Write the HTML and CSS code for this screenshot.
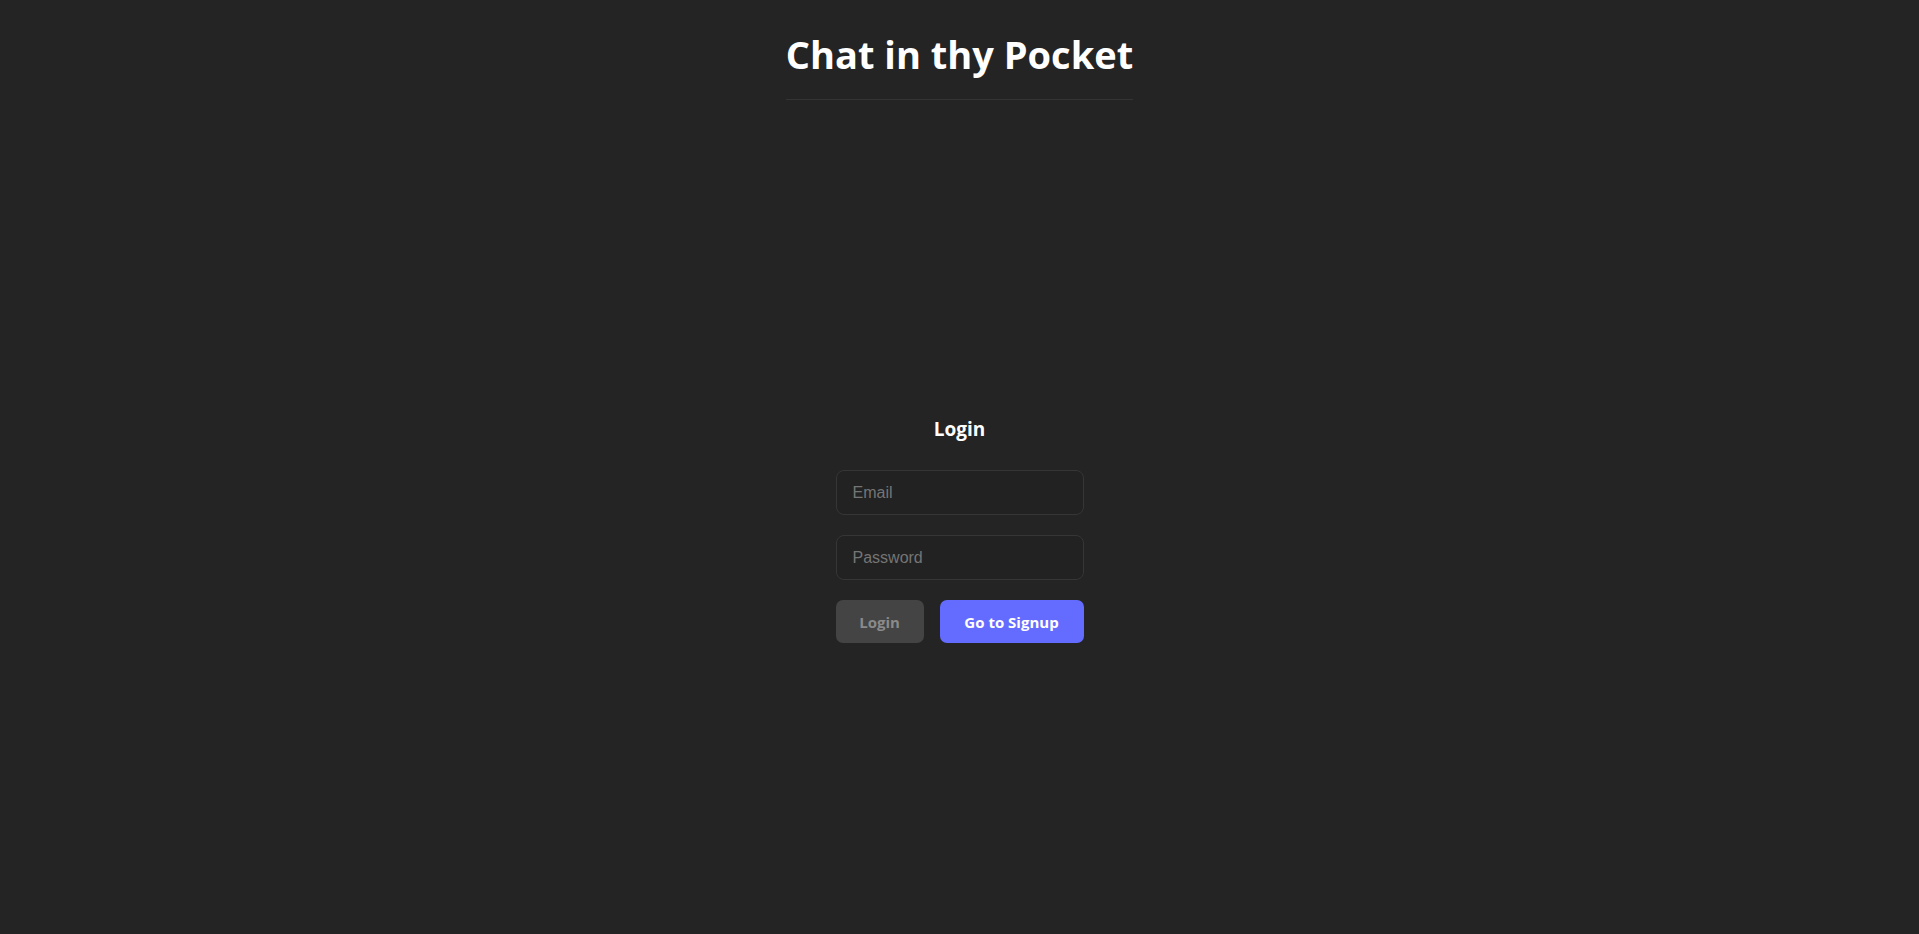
FILE: index.html
```html
<!DOCTYPE html>
<html lang="en">
<head>
<meta charset="utf-8">
<title>Chat in thy Pocket</title>
<link rel="stylesheet" href="styles.css">
</head>
<body>
<div class="app">
  <header class="header">
    <h1 class="title">Chat in thy Pocket</h1>
  </header>
  <main class="main">
    <form class="auth">
      <h2 class="auth-title">Login</h2>
      <input class="field" type="email" placeholder="Email">
      <input class="field" type="password" placeholder="Password">
      <div class="actions">
        <button type="button" class="btn btn-disabled" disabled>Login</button>
        <button type="button" class="btn btn-primary">Go to Signup</button>
      </div>
    </form>
  </main>
</div>
</body>
</html>
```
FILE: styles.css
```css
html, body {
  margin: 0;
  padding: 0;
  height: 100%;
  background: #242424;
  color: #fff;
  font-family: "Open Sans", "Noto Sans", sans-serif;
}

.app {
  min-height: 100vh;
  display: flex;
  flex-direction: column;
  align-items: center;
}

.header {
  display: flex;
  justify-content: center;
  padding-top: 29px;
  border-bottom: 1px solid #343434;
}

.title {
  margin: 0;
  padding-bottom: 20px;
  font-size: 38px;
  font-weight: 700;
  line-height: 50px;
  color: #fff;
  letter-spacing: 0;
}

.main {
  flex: 1;
  display: flex;
  align-items: center;
  justify-content: center;
  padding-top: 23px;
}

.auth {
  width: 248px;
  display: flex;
  flex-direction: column;
  align-items: stretch;
}

.auth-title {
  margin: 2px 0 28px;
  text-align: center;
  font-size: 19px;
  font-weight: 700;
  line-height: 26px;
}

.field {
  box-sizing: border-box;
  height: 45px;
  margin-bottom: 20px;
  padding: 0 16px;
  background: #222;
  border: 1px solid #363636;
  border-radius: 8px;
  color: #ddd;
  font-family: "Liberation Sans", Arial, sans-serif;
  font-size: 16px;
  outline: none;
}

.field::placeholder {
  color: #757575;
}

.actions {
  display: flex;
  gap: 16px;
}

.btn {
  height: 43px;
  padding: 0 22px;
  border: none;
  border-radius: 7px;
  font-family: "Open Sans", "Noto Sans", sans-serif;
  font-size: 15px;
  font-weight: 700;
}

.btn-disabled {
  width: 88px;
  background: #444;
  color: #8a8a8a;
}

.btn-primary {
  width: 144px;
  background: #646cff;
  color: #fff;
}
```
